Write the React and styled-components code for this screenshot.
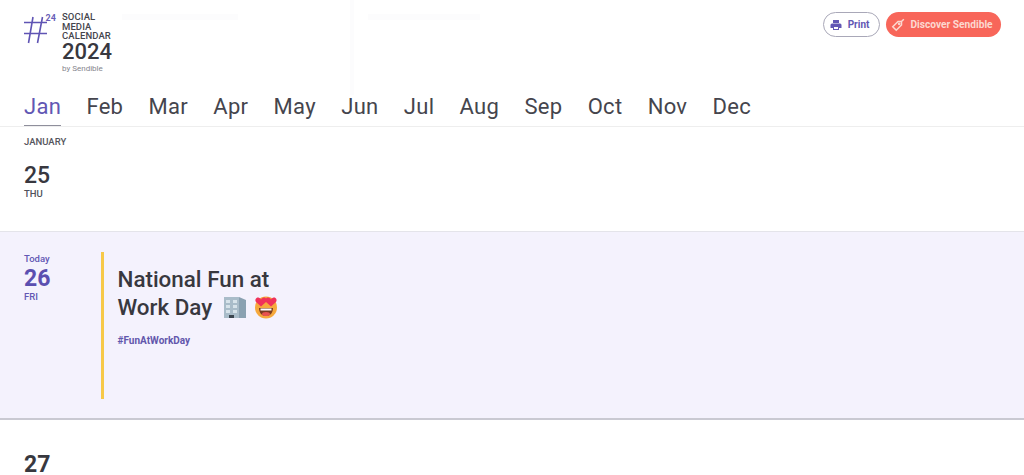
import React from "react";
import styled, { createGlobalStyle } from "styled-components";

const Global = createGlobalStyle`
  html, body { margin: 0; padding: 0; background: #fff; overflow: hidden; }
  body { font-family: "Roboto", "Liberation Sans", sans-serif; color: #35353f; }
`;
const Page = styled.div`width: 1024px; height: 475px; overflow: hidden; display: flex; flex-direction: column;`;
const Header = styled.header`height: 127px; box-sizing: border-box; border-bottom: 1px solid #eeeeee; padding: 12px 23px 0 24px; display: flex; flex-direction: column; position: relative;`;
const TopBar = styled.div`display: flex; justify-content: space-between; align-items: flex-start; height: 81px;`;
const Brand = styled.div`display: flex; gap: 5px;`;
const BrandText = styled.div`display: flex; flex-direction: column; padding-top: 0;`;
const Small = styled.div`font-size: 9.5px; line-height: 9.5px; font-weight: 500; color: #45454d; letter-spacing: .1px;`;
const Year = styled.div`font-size: 22px; line-height: 20px; font-weight: 500; color: #38383f; margin-top: 1px;`;
const By = styled.div`font-size: 8px; line-height: 10px; color: #85858d; margin-top: 2px;`;
const Actions = styled.div`display: flex; gap: 6px; align-items: center;`;
const PrintBtn = styled.div`height: 25px; width: 57px; box-sizing: border-box; border: 1px solid #a9a8b8; border-radius: 13px; padding-right: 4px; display: flex; align-items: center; justify-content: center; gap: 6px; font-size: 10px; font-weight: 700; color: #6257b4;`;
const CtaBtn = styled.div`height: 25px; width: 115px; box-sizing: border-box; border-radius: 13px; padding-right: 3px; background: #f8665a; display: flex; align-items: center; justify-content: center; gap: 5px; font-size: 10.2px; font-weight: 700; color: #fcd8d0;`;
const Months = styled.nav`display: flex; gap: 25.25px; height: 34px;`;
const Month = styled.div`font-size: 22px; line-height: 30px; height: 34px; box-sizing: border-box; letter-spacing: .3px; color: ${p => (p.$active ? "#6257b4" : "#45454d")}; border-bottom: ${p => (p.$active ? "1px solid #8f8f9c" : "none")}; font-weight: 400;`;
const Ghost = styled.div`position: absolute; top: ${p => p.$top}px; left: ${p => p.$left}px; width: ${p => p.$w}px; height: ${p => p.$h}px; background: #fcfcfd;`;
const Row = styled.section`
  box-sizing: border-box; height: ${p => p.$h}px; display: flex; padding: ${p => p.$pad};
  background: ${p => (p.$today ? "#f4f2fd" : "#fff")};
  border-bottom: ${p => p.$border || "none"};
`;
const DateCol = styled.div`width: 77px; flex: none; display: flex; flex-direction: column; padding-top: ${p => p.$top || 0}px;`;
const MonthLabel = styled.div`font-size: 9.5px; line-height: 11px; font-weight: 500; color: #55555d; margin-bottom: 19px;`;
const Today = styled.div`font-size: 9.5px; line-height: 11px; font-weight: 500; color: #6257b4;`;
const Num = styled.div`font-size: 23px; line-height: 20px; font-weight: ${p => p.$weight || 700}; color: ${p => (p.$today ? "#5b4fb0" : "#38383f")}; margin-top: ${p => p.$mt || 0}px;`;
const Day = styled.div`font-size: 9.5px; line-height: 11px; font-weight: 500; margin-top: ${p => p.$mt}px; color: ${p => (p.$today ? "#6257b4" : "#50505a")};`;
const Event = styled.div`border-left: 3.5px solid #f7c948; margin-left: 0; padding: 13px 0 0 13.5px; height: 147px; box-sizing: border-box;`;
const Title = styled.h2`margin: 0; font-size: 22.4px; line-height: 28px; font-weight: 500; color: #38383f; display: block; width: 180px;`;
const Tag = styled.div`font-size: 10px; line-height: 12px; font-weight: 700; color: #6257ac; margin-top: 14px;`;
const Emoji = styled.svg`vertical-align: -4px; margin-left: ${p => p.$ml}px;`;

const months = ["Jan","Feb","Mar","Apr","May","Jun","Jul","Aug","Sep","Oct","Nov","Dec"];

const Hash = () => (
  <svg width="33" height="34" viewBox="0 0 33 34" fill="none" style={{ marginTop: 2 }}>
    <path d="M9 3 4.500 29M18.500 3 13.500 29M0 8.500H23M0 19.500H23" stroke="#5f54b4" strokeWidth="1.6" />
    <text x="21.500" y="7" fontSize="9" fontWeight="700" fill="#6a5fb8" fontFamily="Roboto, sans-serif">24</text>
  </svg>
);
const Printer = () => (
  <svg width="12" height="12" viewBox="0 0 24 24" fill="#6257b4"><path d="M6 2h12v6H6zM4 9h16a3 3 0 0 1 3 3v6h-5v4H6v-4H1v-6a3 3 0 0 1 3-3zm4 7v4h8v-4z" fillRule="evenodd"/></svg>
);
const Tagicon = () => (
  <svg width="14" height="14" viewBox="0 0 24 24" fill="none" stroke="#fcd8d0" strokeWidth="2.6"><path d="M12 6 3 15l6 6 9-9V6zM18 6l4-4"/><circle cx="14" cy="10" r="1" /></svg>
);
const Building = () => (
  <Emoji $ml={5} width="24" height="24" viewBox="0 0 24 24">
    <path d="M1 2h15v21H1z" fill="#a9bcc9"/><path d="M16 2l7 3v18h-7z" fill="#8aa1b1"/>
    <g fill="#d7e3ea"><rect x="3" y="5" width="4" height="3"/><rect x="10" y="5" width="4" height="3"/><rect x="3" y="10" width="4" height="3"/><rect x="10" y="10" width="4" height="3"/><rect x="3" y="15" width="4" height="3"/><rect x="10" y="15" width="4" height="3"/></g>
    <rect x="6" y="20" width="5" height="3" fill="#3b4650"/>
  </Emoji>
);
const Hearts = () => (
  <Emoji $ml={7} width="24" height="24" viewBox="0 0 24 24">
    <circle cx="12" cy="12.500" r="11" fill="#f6a93c"/>
    <path d="M5 13h14c0 5-3 8-7 8s-7-3-7-8z" fill="#7a3b1e"/><path d="M6.500 13.500h11v2h-11z" fill="#fff"/><ellipse cx="12" cy="19" rx="4" ry="2" fill="#e8534f"/>
    <path d="M7 11.500 2 7C.5 5 2 2 4.500 2.500 6 2.800 7 4.500 7 4.500s1-1.700 2.500-2C12 2 13.500 5 12 7z" fill="#f0325a"/>
    <path d="M17 11.500 12 7C10.500 5 12 2 14.500 2.500 16 2.800 17 4.500 17 4.500s1-1.700 2.500-2C22 2 23.500 5 22 7z" fill="#f0325a"/>
  </Emoji>
);

export default function App() {
  return (
    <Page>
      <Global />
      <Header>
        <Ghost $top={14} $left={122} $w={116} $h={6} />
        <Ghost $top={14} $left={368} $w={112} $h={6} />
        <Ghost $top={0} $left={350} $w={4} $h={95} />
        <TopBar>
          <Brand>
            <Hash />
            <BrandText>
              <Small>SOCIAL</Small>
              <Small>MEDIA</Small>
              <Small>CALENDAR</Small>
              <Year>2024</Year>
              <By>by Sendible</By>
            </BrandText>
          </Brand>
          <Actions>
            <PrintBtn><Printer />Print</PrintBtn>
            <CtaBtn><Tagicon />Discover Sendible</CtaBtn>
          </Actions>
        </TopBar>
        <Months>
          {months.map((m, i) => <Month key={m} $active={i === 0}>{m}</Month>)}
        </Months>
      </Header>
      <Row $h={105} $pad="9px 24px 0" $border="1px solid #e4e4ea">
        <DateCol>
          <MonthLabel>JANUARY</MonthLabel>
          <Num $weight={500}>25</Num>
          <Day $mt={2}>THU</Day>
        </DateCol>
      </Row>
      <Row $h={188} $today $pad="20px 24px 0" $border="2px solid #c9c9d2">
        <DateCol $top={1}>
          <Today>Today</Today>
          <Num $today $mt={5}>26</Num>
          <Day $today $mt={2}>FRI</Day>
        </DateCol>
        <Event>
          <Title>National Fun at Work Day <Building /><Hearts /></Title>
          <Tag>#FunAtWorkDay</Tag>
        </Event>
      </Row>
      <Row $h={55} $pad="35px 24px 0">
        <DateCol><Num>27</Num></DateCol>
      </Row>
    </Page>
  );
}
